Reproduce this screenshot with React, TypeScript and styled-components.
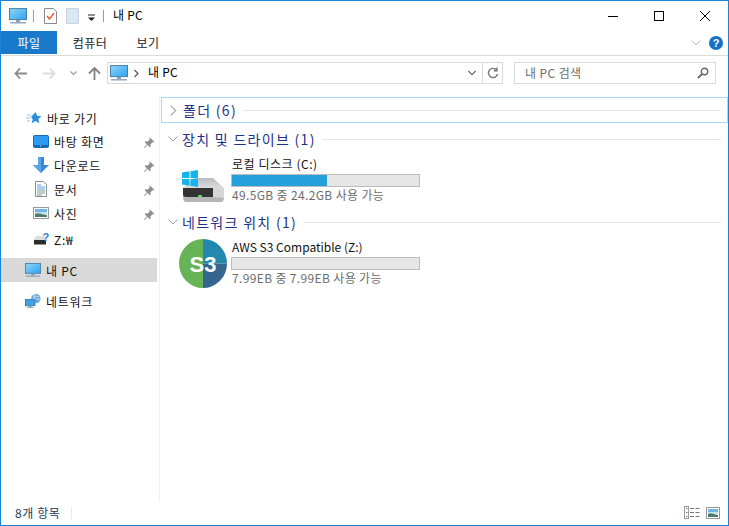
import React from "react";
import styled, { createGlobalStyle } from "styled-components";

const Global = createGlobalStyle`
  html, body { margin: 0; padding: 0; background: #fff; }
  body { font-family: "Noto Sans CJK KR", "Noto Sans", sans-serif; font-size: 12px; color: #000; }
  * { box-sizing: border-box; }
`;

const Window = styled.div`
  width: 729px; height: 526px; border: 1px solid #1883d7; background: #fff;
  display: flex; flex-direction: column; overflow: hidden;
`;
const TitleBar = styled.div`
  height: 30px; flex: none; display: flex; align-items: center; padding-left: 8px;
`;
const Sep = styled.div`
  width: 1px; height: 12px; background: #9a9a9a; margin: 0 ${(p: { $gap?: number }) => p.$gap ?? 10}px 0 ${(p: { $gap?: number }) => p.$gap ?? 6}px;
`;
const TitleText = styled.div`
  font-size: 12px; line-height: 16px; letter-spacing: 0.2px; margin-left: 2px; padding-bottom: 2px;
`;
const Spacer = styled.div` flex: 1; `;
const WinButtons = styled.div` display: flex; height: 30px; `;
const WinButton = styled.div`
  width: 46px; height: 30px; display: flex; align-items: center; justify-content: center;
`;
const Ribbon = styled.div`
  height: 25px; flex: none; display: flex; align-items: stretch; border-bottom: 1px solid #dadbdc; position: relative; padding-bottom: 1px;
`;
const FileTab = styled.div`
  width: 56px; background: #1979ca; color: #fff; display: flex; align-items: center; justify-content: center; font-size: 12px; letter-spacing: 0.5px;
`;
const Tab = styled.div`
  width: ${(p: { $w: number }) => p.$w}px; display: flex; align-items: center; justify-content: center; color: #222; font-size: 12px; letter-spacing: 0.5px;
`;
const RibbonRight = styled.div`
  margin-left: auto; display: flex; align-items: center; gap: 8px; padding-right: 5px;
`;
const Nav = styled.div`
  height: 40px; flex: none; display: flex; align-items: flex-start; padding: 6px 12px 0 12px;
`;
const NavIcons = styled.div`
  width: 94px; height: 22px; display: flex; align-items: center;
`;
const NavIcon = styled.div`
  width: ${(p: { $w: number }) => p.$w}px; display: flex; align-items: center;
  padding-left: ${(p: { $pad: number }) => p.$pad}px;
`;
const Address = styled.div`
  width: 396px; height: 22px; border: 1px solid #d9d9d9; display: flex; align-items: center; padding-left: 2px;
`;
const Crumb = styled.div`
  font-size: 12px; margin-left: 8px; letter-spacing: 0.2px; padding-bottom: 3px;
`;
const AddrEnd = styled.div`
  margin-left: auto; display: flex; align-items: center; height: 20px;
`;
const AddrBtn = styled.div`
  width: 20px; height: 20px; display: flex; align-items: center; justify-content: center;
  border-left: ${(p: { $line?: boolean }) => (p.$line ? "1px solid #d9d9d9" : "none")};
`;
const Search = styled.div`
  width: 202px; height: 22px; margin-left: 11px; border: 1px solid #d9d9d9; display: flex; align-items: center;
  padding: 0 6px 0 10px; color: #6d6d6d; font-size: 12px; letter-spacing: 0.4px; justify-content: space-between;
`;
const SearchLabel = styled.span` padding-bottom: 2px; `;
const Body = styled.div` flex: 1; display: flex; min-height: 0; `;
const Sidebar = styled.div`
  width: 159px; flex: none; border-right: 1px solid #f0f0f0; padding-top: 10px; padding-right: 2px; display: flex; flex-direction: column;
`;
const NavRow = styled.div<{ $indent: number; $top?: number; $sel?: boolean; $lift?: boolean }>`
  height: 24px; display: flex; align-items: center; position: relative;
  padding-left: ${(p) => p.$indent}px;
  padding-bottom: ${(p) => (p.$lift ? 2 : 0)}px;
  margin-top: ${(p) => p.$top ?? 0}px;
  background: ${(p) => (p.$sel ? "#d9d9d9" : "transparent")};
  color: #111; font-size: 12px; letter-spacing: 0.75px;
`;
const NavIconBox = styled.div`
  width: 16px; height: 16px; display: flex; align-items: center; justify-content: center; margin-right: 5px; flex: none;
`;
const Pin = styled.div` position: absolute; left: 142px; top: 5px; width: 12px; height: 12px; `;
const Main = styled.div`
  flex: 1; padding: 1px 0 0 1px; display: flex; flex-direction: column;
`;
const GroupHeader = styled.div<{ $sel?: boolean; $top?: number }>`
  height: 26px; display: flex; align-items: center; padding-left: 6px; gap: 4px;
  border: 1px solid ${(p) => (p.$sel ? "#a6d8ff" : "transparent")};
  margin-top: ${(p) => p.$top ?? 0}px;
  color: #1e3287; font-size: 14px; letter-spacing: 1.3px; white-space: nowrap;
`;
const GroupLine = styled.div`
  flex: 1; height: 1px; background: #e5e5e5; margin: 0 6px 0 2px;
`;
const Tile = styled.div`
  display: flex; padding: 4px 0 0 18px; height: ${(p: { $h: number }) => p.$h}px;
`;
const TileIcon = styled.div`
  width: 52px; flex: none; padding-left: ${(p: { $left: number }) => p.$left}px; padding-top: ${(p: { $pt: number }) => p.$pt}px;
`;
const TileText = styled.div`
  width: 189px; display: flex; flex-direction: column;
`;
const TileName = styled.div`
  font-size: 12px; line-height: 16px; color: #111; padding-left: 1px;
  letter-spacing: ${(p: { $track: number }) => p.$track}px;
`;
const Bar = styled.div`
  height: 13px; margin-top: 2px; border: 1px solid #bcbcbc; background: #e6e6e6;
`;
const BarFill = styled.div` height: 100%; background: #26a0da; `;
const TileSub = styled.div`
  font-size: 12px; line-height: 16px; color: #6d6d6d; padding-left: 1px; letter-spacing: 0.35px;
`;
const Status = styled.div`
  height: 23px; flex: none; display: flex; align-items: center; padding: 0 7px 2px 14px; font-size: 12px; color: #1e3a5a; letter-spacing: 0.6px;
`;
const StatusDivider = styled.div` width: 1px; height: 12px; background: #eaeaea; margin-left: 11px; `;
const StatusIcons = styled.div` margin-left: auto; display: flex; gap: 6px; align-items: center; `;

const Monitor = ({ w = 18 }: { w?: number }) => (
  <svg width={w} height={w * 0.9} viewBox="0 0 18 16">
    <defs>
      <linearGradient id="scr" x1="0" y1="0" x2="1" y2="1">
        <stop offset="0" stopColor="#8fd6fb" />
        <stop offset="1" stopColor="#2ea2ee" />
      </linearGradient>
    </defs>
    <rect x="0.5" y="0.5" width="17" height="11" fill="url(#scr)" stroke="#4a7fa3" />
    <rect x="7" y="12" width="4" height="2" fill="#8a9bab" />
    <rect x="1" y="14" width="16" height="1.4" fill="#8ba3bd" />
  </svg>
);
const Star = () => (
  <svg width="16" height="14" viewBox="0 0 16 14">
    <path d="M9.5 1l1.7 3.8 4.3.4-3.2 2.8 1 4.2-3.8-2.2-3.8 2.2 1-4.2L5 6z" fill="#2b8fdf" />
    <path d="M1 4h4M0 7h4M1 10h3" stroke="#8cc6f0" strokeWidth="1" />
  </svg>
);
const DesktopIcon = () => (
  <svg width="16" height="13" viewBox="0 0 16 13">
    <rect x="0.5" y="0.5" width="15" height="12" rx="1" fill="#2b9cf2" stroke="#1668b8" />
    <rect x="1" y="10" width="14" height="2" fill="#1668b8" />
    <rect x="7" y="10.5" width="1" height="1" fill="#cfe6fb" />
  </svg>
);
const DownloadIcon = () => (
  <svg width="16" height="16" viewBox="0 0 16 16">
    <path d="M5 0h6v8h5l-8 8-8-8h5z" fill="#3a87d6" />
    <path d="M5 0h3v16l-8-8h5z" fill="#5aa5ea" />
  </svg>
);
const DocIcon = () => (
  <svg width="12" height="16" viewBox="0 0 12 16">
    <path d="M0.5 0.5h8l3 3v12h-11z" fill="#fff" stroke="#8a8a8a" />
    <path d="M2 4h4M2 6h8M2 8h8" stroke="#5aa0dc" />
    <path d="M2 10h8M2 12h8M2 14h5" stroke="#7f9a90" />
  </svg>
);
const PicIcon = () => (
  <svg width="16" height="12" viewBox="0 0 16 12">
    <rect x="0.5" y="0.5" width="15" height="11" fill="#fff" stroke="#999" />
    <rect x="2" y="2" width="12" height="3" fill="#6fb6ea" />
    <rect x="2" y="5" width="12" height="2" fill="#c9dfe8" />
    <path d="M2 7c3-1 6 0 12 1v2H2z" fill="#4d7a6a" />
  </svg>
);
const DriveQ = () => (
  <svg width="16" height="14" viewBox="0 0 16 14">
    <path d="M1 7l2-3h8l2 3v5H1z" fill="#ddd" />
    <rect x="1" y="8" width="12" height="4.5" fill="#2b2b2b" />
    <text x="9.5" y="9" fontSize="11" fontWeight="700" fill="#2b7fd0" fontFamily="Liberation Sans">?</text>
  </svg>
);
const NetIcon = () => (
  <svg width="17" height="16" viewBox="0 0 17 16">
    <circle cx="11.5" cy="5.5" r="5" fill="#6aa8d8" />
    <path d="M8 2c2 2 5 2 7 1M7 6h9M11 1c-2 3-2 6 0 9" stroke="#d5e8f5" fill="none" strokeWidth="0.8" />
    <rect x="0.5" y="6.5" width="10" height="6.5" fill="#3fa2ea" stroke="#3a7ba8" />
    <rect x="4" y="13" width="3" height="1.5" fill="#8a9bab" />
    <rect x="2" y="14.5" width="7" height="1" fill="#8ba3bd" />
  </svg>
);
const PinIcon = () => (
  <svg width="12" height="12" viewBox="0 0 12 12">
    <path d="M7 0.5l4.5 4.5-1.2.6-.8-.3-2 2 .2 2-1 1L4.5 8 1.5 11l-.6-.5 3-3L1.7 5.3l1-1 2 .2 2-2-.3-.8z" fill="#8f8f8f" />
  </svg>
);
const Chevron = ({ dir, color = "#a0a0a0", size = 10, sw = 1 }: { dir: "right" | "down"; color?: string; size?: number; sw?: number }) => (
  <svg width={size} height={size} viewBox="0 0 10 10">
    <path d={dir === "right" ? "M2.5 0.5L7 5l-4.5 4.5" : "M0.5 2.5L5 7l4.500-4.500"} fill="none" stroke={color} strokeWidth={sw} />
  </svg>
);
const WinDrive = () => (
  <svg width="46" height="38" viewBox="0 0 46 38" style={{ display: "block" }}>
    <defs>
      <linearGradient id="drvTop" x1="0" y1="0" x2="0" y2="1">
        <stop offset="0" stopColor="#b9bcbe" />
        <stop offset="1" stopColor="#eceded" />
      </linearGradient>
    </defs>
    <path d="M13 11h19l11 10v5l-41-5z" fill="url(#drvTop)" />
    <path d="M2 21h32l9 0v9c0 3-1 5-3 5H5c-2 0-3-2-3-5z" fill="#b5b5b5" />
    <path d="M2 21h30v9H5c-2 0-3-1-3-3z" fill="#333" />
    <path d="M32 21h11v10l-11-1z" fill="#d6d6d6" />
    <rect x="17" y="28" width="4" height="2" fill="#54d354" />
    <path d="M1 5.500l7.500-1.200V11H1zM9.500 4.200L17 3v8H9.500zM1 12h7.500v6.800L1 17.600zM9.500 12H17v8l-7.500-1.200z" fill="#13b5ee" />
  </svg>
);
const S3Badge = () => (
  <svg width="48" height="49" viewBox="0 0 48 49" style={{ display: "block" }}>
    <path d="M24 0a24 24.500 0 0 0 0 49z" fill="#67b457" />
    <path d="M24 0a24 24.500 0 0 1 24 24.500H24z" fill="#2488ae" />
    <path d="M48 24.500a24 24.500 0 0 1-24 24.500V24.500z" fill="#356690" />
    <text x="24" y="32.500" textAnchor="middle" fontFamily="Liberation Sans" fontWeight="700" fontSize="22" fill="#fff">S3</text>
  </svg>
);

const quick = [
  { label: "바탕 화면", icon: <DesktopIcon /> },
  { label: "다운로드", icon: <DownloadIcon /> },
  { label: "문서", icon: <DocIcon /> },
  { label: "사진", icon: <PicIcon /> },
];

export default function App() {
  return (
    <>
      <Global />
      <Window>
        <TitleBar>
          <Monitor />
          <Sep />
          <svg width="13" height="16" viewBox="0 0 13 16">
            <path d="M0.500 0.500h9l3 3v12H0.500z" fill="#fff" stroke="#8a8a8a" />
            <path d="M3 8l2.500 3L10 5" fill="none" stroke="#e0662a" strokeWidth="1.500" />
          </svg>
          <svg width="13" height="16" viewBox="0 0 13 16" style={{ marginLeft: 9 }}>
            <path d="M0.500 0.500h12v15H0.500z" fill="#dde5f2" stroke="#c8d3e6" />
          </svg>
          <svg width="9" height="9" viewBox="0 0 9 9" style={{ marginLeft: 8, marginTop: 4 }}>
            <path d="M1 1h7" stroke="#222" />
            <path d="M1 3.500h7L4.500 7z" fill="#222" />
          </svg>
          <Sep $gap={7} />
          <TitleText>내 PC</TitleText>
          <Spacer />
          <WinButtons>
            <WinButton>
              <svg width="10" height="10" viewBox="0 0 10 10"><path d="M0 5.500h10" stroke="#000" /></svg>
            </WinButton>
            <WinButton>
              <svg width="10" height="10" viewBox="0 0 10 10"><rect x="0.500" y="0.500" width="9" height="9" fill="none" stroke="#000" /></svg>
            </WinButton>
            <WinButton>
              <svg width="10" height="10" viewBox="0 0 10 10"><path d="M0 0l10 10M10 0L0 10" stroke="#000" /></svg>
            </WinButton>
          </WinButtons>
        </TitleBar>
        <Ribbon>
          <FileTab>파일</FileTab>
          <Tab $w={66}>컴퓨터</Tab>
          <Tab $w={50}>보기</Tab>
          <RibbonRight>
            <Chevron dir="down" color="#b5b5b5" />
            <svg width="14" height="14" viewBox="0 0 14 14">
              <circle cx="7" cy="7" r="7" fill="#1470c8" />
              <text x="7" y="11" textAnchor="middle" fontFamily="Liberation Sans" fontWeight="700" fontSize="11" fill="#fff">?</text>
            </svg>
          </RibbonRight>
        </Ribbon>
        <Nav>
          <NavIcons>
            <NavIcon $w={30} $pad={1}>
              <svg width="13" height="11" viewBox="0 0 13 11"><path d="M6 0.500L1.500 5.500 6 10.500M1.500 5.500H13" fill="none" stroke="#8a8a8a" strokeWidth="1.800" /></svg>
            </NavIcon>
            <NavIcon $w={27} $pad={0}>
              <svg width="13" height="11" viewBox="0 0 13 11"><path d="M7 0.500l4.500 5-4.500 5M11.500 5.500H0" fill="none" stroke="#dcdcdc" strokeWidth="1.800" /></svg>
            </NavIcon>
            <NavIcon $w={18} $pad={0}>
              <svg width="7" height="5" viewBox="0 0 7 5"><path d="M0.500 0.500L3.500 3.500 6.500 0.500" fill="none" stroke="#9a9a9a" strokeWidth="1.200" /></svg>
            </NavIcon>
            <NavIcon $w={19} $pad={0}>
              <svg width="13" height="13" viewBox="0 0 13 13"><path d="M1 6.500l5.500-5.500 5.500 5.500M6.500 1v12" fill="none" stroke="#808080" strokeWidth="1.800" /></svg>
            </NavIcon>
          </NavIcons>
          <Address>
            <Monitor />
            <svg width="7" height="9" viewBox="0 0 7 9" style={{ marginLeft: 5 }}><path d="M1.500 1l3.500 3.500L1.500 8" fill="none" stroke="#555" strokeWidth="1.200" /></svg>
            <Crumb>내 PC</Crumb>
            <AddrEnd>
              <AddrBtn><Chevron dir="down" color="#666" size={8} sw={1.500} /></AddrBtn>
              <AddrBtn $line>
                <svg width="12" height="12" viewBox="0 0 12 12"><path d="M9.800 3.200A4.600 4.600 0 1 0 10.600 7M10 0.500v3.200H6.800" fill="none" stroke="#777" strokeWidth="1.400" /></svg>
              </AddrBtn>
            </AddrEnd>
          </Address>
          <Search>
            <SearchLabel>내 PC 검색</SearchLabel>
            <svg width="12" height="12" viewBox="0 0 12 12"><circle cx="7.500" cy="4.500" r="3.200" fill="none" stroke="#666" strokeWidth="1.400" /><path d="M5 7L1 11" stroke="#666" strokeWidth="1.800" /></svg>
          </Search>
        </Nav>
        <Body>
          <Sidebar>
            <NavRow $indent={25}><NavIconBox><Star /></NavIconBox>바로 가기</NavRow>
            {quick.map((q) => (
              <NavRow key={q.label} $indent={32} $lift>
                <NavIconBox>{q.icon}</NavIconBox>{q.label}
                <Pin><PinIcon /></Pin>
              </NavRow>
            ))}
            <NavRow $indent={32} $top={1}><NavIconBox><DriveQ /></NavIconBox>Z:₩</NavRow>
            <NavRow $indent={24} $top={7} $sel><NavIconBox><Monitor w={16} /></NavIconBox>내 PC</NavRow>
            <NavRow $indent={24} $top={7}><NavIconBox><NetIcon /></NavIconBox>네트워크</NavRow>
          </Sidebar>
          <Main>
            <GroupHeader $sel>
              <Chevron dir="right" size={11} />폴더 (6)<GroupLine />
            </GroupHeader>
            <GroupHeader $top={3}>
              <Chevron dir="down" />장치 및 드라이브 (1)<GroupLine />
            </GroupHeader>
            <Tile $h={57}>
              <TileIcon $left={2} $pt={11}><WinDrive /></TileIcon>
              <TileText>
                <TileName $track={0.55}>로컬 디스크 (C:)</TileName>
                <Bar><BarFill style={{ width: `${(24.2 / 49.5) * 100 + 1.8}%` }} /></Bar>
                <TileSub>49.5GB 중 24.2GB 사용 가능</TileSub>
              </TileText>
            </Tile>
            <GroupHeader>
              <Chevron dir="down" />네트워크 위치 (1)<GroupLine />
            </GroupHeader>
            <Tile $h={54}>
              <TileIcon $left={0} $pt={0}><S3Badge /></TileIcon>
              <TileText>
                <TileName $track={0}>AWS S3 Compatible (Z:)</TileName>
                <Bar />
                <TileSub>7.99EB 중 7.99EB 사용 가능</TileSub>
              </TileText>
            </Tile>
          </Main>
        </Body>
        <Status>
          <span>8개 항목</span>
          <StatusDivider />
          <StatusIcons>
            <svg width="16" height="13" viewBox="0 0 16 13">
              <rect x="0.500" y="0.500" width="4" height="12" fill="#fff" stroke="#9a9a9a" />
              <path d="M2 2.500h1.500M2 6.500h1.500" stroke="#777" />
              <path d="M2 10.500h1.500" stroke="#d0504a" />
              <path d="M6 2.500h4M11.500 2.500h4M6 6.500h4M11.500 6.500h4M6 10.500h4M11.500 10.500h4" stroke="#777" />
            </svg>
            <svg width="14" height="12" viewBox="0 0 14 12" style={{ marginRight: 1 }}>
              <rect x="0.500" y="0.500" width="13" height="11" fill="#fff" stroke="#999" />
              <rect x="2" y="2" width="10" height="3" fill="#6fb6ea" />
              <rect x="2" y="5" width="10" height="2" fill="#c9dfe8" />
              <path d="M2 7c3-1 5 0 10 1v2H2z" fill="#4d7a6a" />
            </svg>
          </StatusIcons>
        </Status>
      </Window>
    </>
  );
}
